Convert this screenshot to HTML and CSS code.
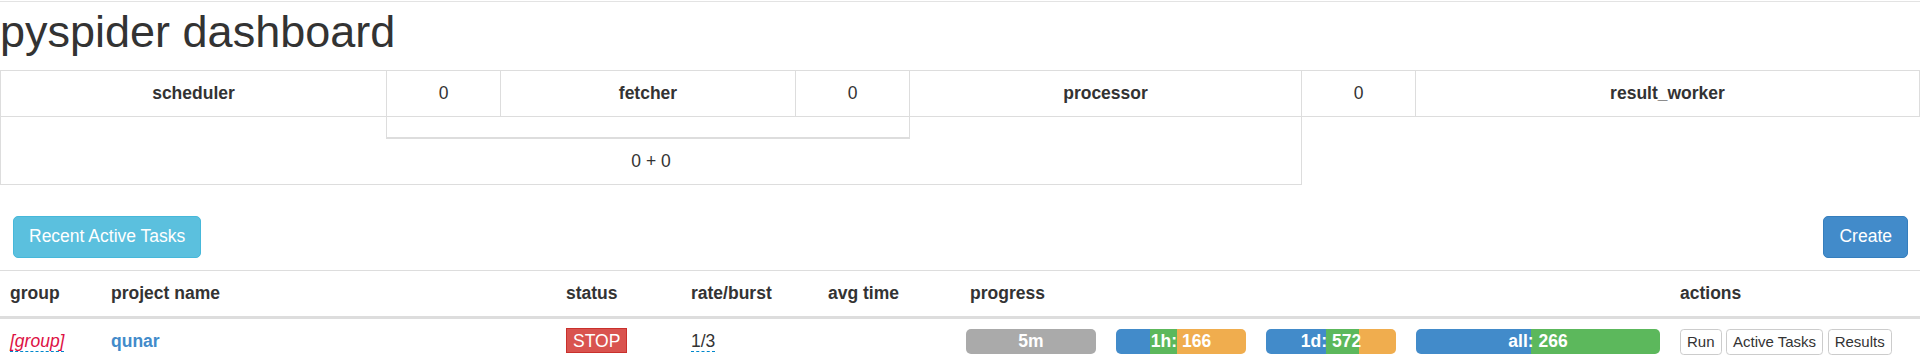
FILE: index.html
```html
<!DOCTYPE html>
<html lang="en">
<head>
  <meta charset="UTF-8">
  <title>pyspider dashboard</title>
  <link rel="stylesheet" href="styles.css">
</head>
<body>
  <header class="topbar"></header>
  <h1>pyspider dashboard</h1>

  <table class="queue-info">
    <tr>
      <th class="q-scheduler">scheduler</th>
      <td class="q-value">0</td>
      <th class="q-fetcher">fetcher</th>
      <td class="q-value">0</td>
      <th class="q-processor">processor</th>
      <td class="q-value">0</td>
      <th class="q-result">result_worker</th>
    </tr>
    <tr>
      <td colspan="5" class="q-total">
        <div class="q-sub"></div>
        <div class="q-sum">0 + 0</div>
      </td>
    </tr>
  </table>

  <div class="toolbar">
    <a href="#" class="btn btn-info">Recent Active Tasks</a>
    <a href="#" class="btn btn-primary">Create</a>
  </div>

  <table class="projects">
    <thead>
      <tr>
        <th class="p-group">group</th>
        <th class="p-name">project name</th>
        <th class="p-status">status</th>
        <th class="p-rate">rate/burst</th>
        <th class="p-time">avg time</th>
        <th class="p-progress">progress</th>
        <th class="p-actions">actions</th>
      </tr>
    </thead>
    <tbody>
      <tr>
        <td><span class="editable editable-empty">[group]</span></td>
        <td><a href="#" class="project-link">qunar</a></td>
        <td><span class="status status-stop">STOP</span></td>
        <td><span class="editable">1/3</span></td>
        <td></td>
        <td class="progress-cell">
          <div class="bars">
            <div class="progress">
              <div class="bar bar-idle" style="width:100%"></div>
              <span class="progress-text">5m</span>
            </div>
            <div class="progress">
              <div class="bar bar-pending" style="width:26%"></div>
              <div class="bar bar-success" style="width:21%"></div>
              <div class="bar bar-retry" style="width:53%"></div>
              <span class="progress-text">1h: 166</span>
            </div>
            <div class="progress">
              <div class="bar bar-pending" style="width:46.5%"></div>
              <div class="bar bar-success" style="width:24.8%"></div>
              <div class="bar bar-retry" style="width:28.7%"></div>
              <span class="progress-text">1d: 572</span>
            </div>
            <div class="progress progress-all">
              <div class="bar bar-pending" style="width:47%"></div>
              <div class="bar bar-success" style="width:53%"></div>
              <span class="progress-text">all: 266</span>
            </div>
          </div>
        </td>
        <td>
          <div class="actions">
            <a href="#" class="btn btn-xs">Run</a>
            <a href="#" class="btn btn-xs">Active Tasks</a>
            <a href="#" class="btn btn-xs">Results</a>
          </div>
        </td>
      </tr>
    </tbody>
  </table>
</body>
</html>
```
FILE: styles.css
```css
body { margin: 0; font-family: "Liberation Sans", Arial, sans-serif; font-size: 17.5px; line-height: 25px; color: #333; background: #fff; }
a { text-decoration: none; }

.topbar { height: 1px; border-bottom: 1px solid #e3e3e3; }
h1 { font-size: 45px; font-weight: normal; line-height: 49.5px; margin: 5px 0 13px; color: #333; }

/* queue info */
.queue-info { width: 100%; border-collapse: collapse; table-layout: fixed; }
.queue-info th, .queue-info td { box-sizing: border-box; border: 1px solid #ddd; padding: 10px; text-align: center; }
.queue-info th { font-weight: bold; }
.q-scheduler { width: 386px; }
.q-value { width: 114px; }
.q-fetcher { width: 295px; }
.q-processor { width: 392px; }
.queue-info .q-total { padding: 0; }
.q-sub { margin-left: 385px; width: 522px; height: 20px; border: 1px solid #ddd; border-top: 0; border-bottom-width: 2px; }
.q-sum { padding: 10px; }

/* toolbar */
.toolbar { display: flex; justify-content: space-between; padding: 31px 12px 12px 13px; }
.btn { display: inline-block; padding: 7.5px 15px; border: 1px solid transparent; border-radius: 5px; font-size: 17.5px; line-height: 25px; color: #fff; white-space: nowrap; }
.btn-info { background: #5bc0de; border-color: #46b8da; }
.btn-primary { background: #428bca; border-color: #357ebd; }
.btn-xs { padding: 1px 6px; font-size: 15px; line-height: 22.5px; border-radius: 3.75px; color: #333; background: #fff; border-color: #ccc; }

/* projects */
.projects { width: 100%; border-collapse: collapse; table-layout: fixed; }
.projects th, .projects td { box-sizing: border-box; padding: 10px; text-align: left; vertical-align: top; }
.projects thead th { font-weight: bold; border-top: 1px solid #ddd; border-bottom: 3px solid #ddd; }
.p-group { width: 101px; }
.p-name { width: 455px; }
.p-status { width: 125px; }
.p-rate { width: 137px; }
.p-time { width: 142px; }
.p-progress { width: 710px; }

.editable { border-bottom: 1px dashed #0088cc; }
.editable-empty { font-style: italic; color: #dd1144; }
.project-link { color: #428bca; font-weight: bold; }
.status { border: 1px solid #c9302c; padding: 2px 6px 1px; background: #d9534f; color: #fff; }

.projects .progress-cell { padding-left: 6px; }
.bars { display: flex; gap: 20px; }
.progress { position: relative; display: flex; width: 130px; height: 25px; border-radius: 5px; overflow: hidden; background: #f5f5f5; }
.progress-all { width: 244px; }
.bar { height: 100%; }
.bar-idle { background: #aaaaaa; }
.bar-pending { background: #428bca; }
.bar-success { background: #5cb85c; }
.bar-retry { background: #f0ad4e; }
.progress-text { position: absolute; left: 0; right: 0; top: 0; text-align: center; color: #fff; font-weight: bold; font-size: 17.5px; line-height: 25px; }

.actions { display: flex; gap: 4.5px; }
```
